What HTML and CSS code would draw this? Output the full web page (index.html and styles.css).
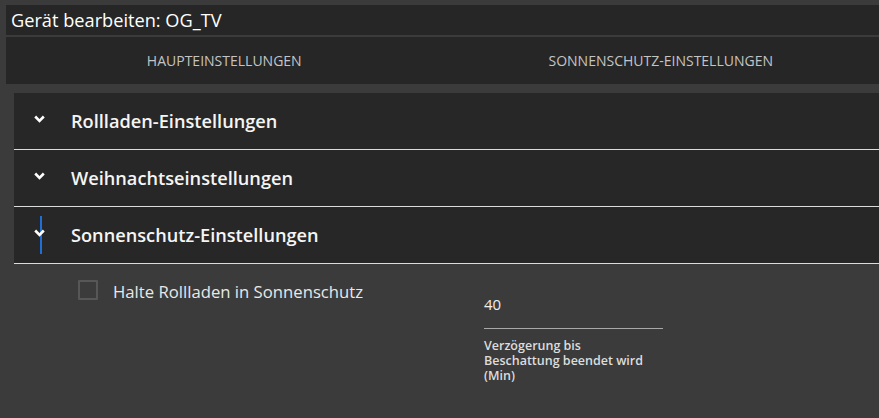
FILE: index.html
```html
<!DOCTYPE html>
<html lang="de">
<head>
  <meta charset="UTF-8" />
  <meta name="viewport" content="width=device-width, initial-scale=1.0"/>
  <title>Gerät bearbeiten</title>
  <link rel="stylesheet" href="styles.css">
</head>
<body>
  <div class="dialog">
    <div class="title-bar">Gerät bearbeiten: OG_TV</div>

    <div class="tabs">
      <button class="tab">HAUPTEINSTELLUNGEN</button>
      <button class="tab">SONNENSCHUTZ-EINSTELLUNGEN</button>
    </div>

    <div class="panel">
      <div class="accordion">
        <div class="acc-header">
          <svg class="chevron" width="11" height="8" viewBox="0 0 11 8"><path d="M1.2 1.5 L5.5 5.8 L9.8 1.5" fill="none" stroke="#fff" stroke-width="2.6"/></svg>
          <span>Rollladen-Einstellungen</span>
        </div>
        <div class="acc-header">
          <svg class="chevron" width="11" height="8" viewBox="0 0 11 8"><path d="M1.2 1.5 L5.5 5.8 L9.8 1.5" fill="none" stroke="#fff" stroke-width="2.6"/></svg>
          <span>Weihnachtseinstellungen</span>
        </div>
        <div class="acc-header focused">
          <svg class="chevron" width="11" height="8" viewBox="0 0 11 8"><path d="M1.2 1.5 L5.5 5.8 L9.8 1.5" fill="none" stroke="#fff" stroke-width="2.6"/></svg>
          <span>Sonnenschutz-Einstellungen</span>
        </div>

        <div class="acc-body">
          <label class="check-field">
            <span class="check-box"></span>
            <span>Halte Rollladen in Sonnenschutz</span>
          </label>

          <div class="number-field">
            <div class="number-value">40</div>
            <div class="number-label">Verzögerung bis Beschattung beendet wird (Min)</div>
          </div>
        </div>
      </div>
    </div>
  </div>
</body>
</html>
```

FILE: styles.css
```css
body {
  margin: 0;
  background-color: #3b3b3b;
  font-family: "Open Sans", "Noto Sans", sans-serif;
  color: #f2f2f2;
  overflow: hidden;
}

.dialog {
  padding: 5px 0 0 6px;
}

.title-bar {
  height: 30px;
  line-height: 30px;
  padding-left: 5px;
  background-color: #262626;
  font-size: 18.2px;
  color: #ffffff;
}

.tabs {
  display: flex;
  margin-top: 2px;
  height: 47px;
  background-color: #262626;
}

.tab {
  flex: 1;
  border: none;
  background: none;
  font-family: inherit;
  font-size: 14px;
  font-weight: 400;
  color: #c4c4c4;
  padding: 0;
}

.panel {
  padding: 9px 0 0 8px;
}

.acc-header {
  position: relative;
  display: flex;
  align-items: center;
  height: 56px;
  border-bottom: 1px solid #dcdcdc;
  background-color: #272727;
  font-size: 18.2px;
  font-weight: 600;
  color: #f5f5f5;
}

.acc-header .chevron {
  margin: 0 26px 0 20px;
  position: relative;
  top: -2px;
}

.acc-header.focused::before {
  content: "";
  position: absolute;
  left: 26px;
  top: 9px;
  width: 2px;
  height: 38px;
  background-color: #1f6fd6;
}

.acc-body {
  display: flex;
  padding: 16px 0 0 64px;
  height: 140px;
}

.check-field {
  display: flex;
  align-items: flex-start;
  gap: 15px;
  width: 406px;
  font-size: 16.7px;
  color: #e8e8e8;
}

.check-box {
  flex: none;
  width: 16px;
  height: 16px;
  border: 2px solid #575757;
  border-radius: 1px;
}

.number-field {
  width: 179px;
  padding-top: 14px;
}

.number-value {
  font-size: 15px;
  color: #eeeeee;
  padding-bottom: 14px;
  border-bottom: 1px solid #a8a8a8;
}

.number-label {
  max-width: 168px;
  margin-top: 9px;
  font-size: 12.5px;
  font-weight: 600;
  line-height: 15px;
  color: #dddddd;
}
```
